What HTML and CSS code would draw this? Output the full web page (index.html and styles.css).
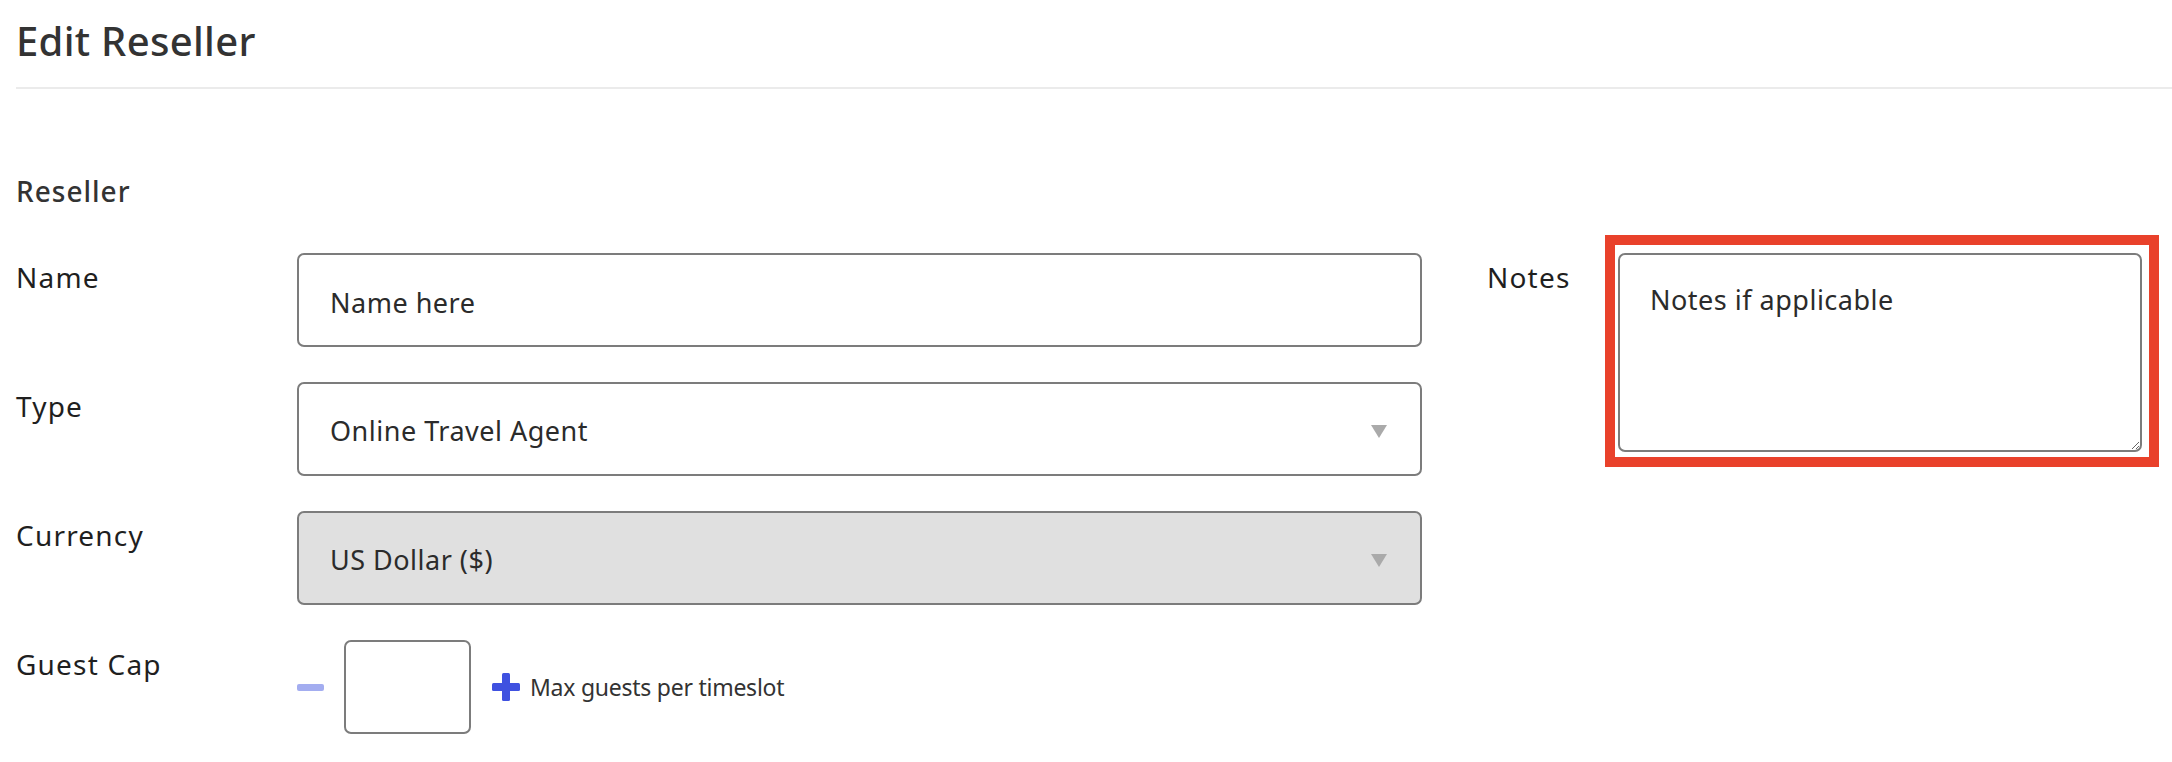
FILE: index.html
```html
<!DOCTYPE html>
<html lang="en">
<head>
<meta charset="utf-8">
<title>Edit Reseller</title>
<link rel="stylesheet" href="styles.css">
</head>
<body>
<main class="page">
  <header class="page-header">
    <h1 class="page-title">Edit Reseller</h1>
  </header>
  <section class="section">
    <h2 class="section-title">Reseller</h2>
    <div class="form-cols">
      <div class="col-main">
        <div class="row">
          <label class="label" for="name">Name</label>
          <input class="field wide" id="name" type="text" value="Name here">
        </div>
        <div class="row">
          <label class="label" for="type">Type</label>
          <div class="select-wrap">
            <select class="field select" id="type"><option>Online Travel Agent</option></select>
          </div>
        </div>
        <div class="row">
          <label class="label" for="currency">Currency</label>
          <div class="select-wrap">
            <select class="field select is-disabled" id="currency"><option>US Dollar ($)</option></select>
          </div>
        </div>
        <div class="row">
          <label class="label" for="guests">Guest Cap</label>
          <div class="stepper">
            <span class="minus" aria-label="decrease"></span>
            <input class="field guest" id="guests" type="text" value="">
            <svg class="plus" viewBox="0 0 28 28" aria-label="increase"><rect x="10" y="0" width="8" height="28" rx="1.5"/><rect x="0" y="10" width="28" height="8" rx="1.5"/></svg>
            <span class="hint">Max guests per timeslot</span>
          </div>
        </div>
      </div>
      <div class="col-side">
        <div class="row">
          <label class="label notes-label" for="notes">Notes</label>
          <div class="notes-wrap">
            <textarea class="field notes" id="notes">Notes if applicable</textarea>
            <span class="highlight"></span>
          </div>
        </div>
      </div>
    </div>
  </section>
</main>
</body>
</html>
```
FILE: styles.css
```css
body {
  margin: 0;
  background: #fff;
  color: #222;
  font-family: "Noto Sans", "DejaVu Sans", sans-serif;
}

.page {
  padding: 0 0 0 16px;
}

.page-header {
  padding: 18px 0 23px;
  border-bottom: 2px solid #ebebeb;
}

.page-title {
  margin: 0;
  font-size: 40px;
  line-height: 46px;
  font-weight: 500;
  letter-spacing: 0.3px;
  color: #333;
}

.section-title {
  margin: 85px 0 45px;
  font-size: 28px;
  line-height: 34px;
  font-weight: 500;
  letter-spacing: 1px;
  color: #333;
}

.form-cols {
  display: flex;
  gap: 65px;
}

.col-main {
  width: 1406px;
  flex: none;
  display: flex;
  flex-direction: column;
  gap: 35px;
}

.row {
  display: flex;
  align-items: flex-start;
}

.label {
  width: 281px;
  flex: none;
  padding-top: 5px;
  font-size: 28px;
  line-height: 38px;
  letter-spacing: 1.2px;
  color: #1f1f1f;
}

.notes-label {
  width: 131px;
}

.field {
  box-sizing: border-box;
  height: 94px;
  margin: 0;
  padding: 4px 30px 0 31px;
  border: 2px solid #7c7c7c;
  border-radius: 7px;
  background: #fff;
  font-family: "Noto Sans", "DejaVu Sans", sans-serif;
  font-size: 27px;
  line-height: 36px;
  letter-spacing: 0.5px;
  color: #2b2b2b;
  outline: none;
}

.wide {
  width: 1125px;
}

.select-wrap {
  position: relative;
  width: 1125px;
}

.select {
  width: 100%;
  appearance: none;
  -webkit-appearance: none;
}

.select.is-disabled {
  background: #e0e0e0;
}

.select-wrap::after {
  content: "";
  position: absolute;
  right: 35px;
  top: 43px;
  border-left: 8px solid transparent;
  border-right: 8px solid transparent;
  border-top: 13px solid #aaa;
  pointer-events: none;
}

.stepper {
  display: flex;
  align-items: center;
  height: 94px;
}

.minus {
  width: 27px;
  height: 7px;
  border-radius: 2px;
  background: #a3adf0;
  margin-right: 20px;
}

.guest {
  width: 127px;
  padding: 0;
}

.plus {
  width: 28px;
  height: 28px;
  margin: 0 10px 0 21px;
  fill: #3f51e0;
}

.hint {
  font-size: 23px;
  letter-spacing: -0.25px;
  color: #333;
}

.notes-wrap {
  position: relative;
  width: 524px;
  height: 199px;
}

.notes {
  display: block;
  width: 524px;
  height: 199px;
  padding: 27px 30px 0 30px;
  resize: both;
}

.highlight {
  position: absolute;
  top: -18px;
  left: -13px;
  right: -17px;
  bottom: -15px;
  border: 10px solid #e9412b;
  pointer-events: none;
}
```
